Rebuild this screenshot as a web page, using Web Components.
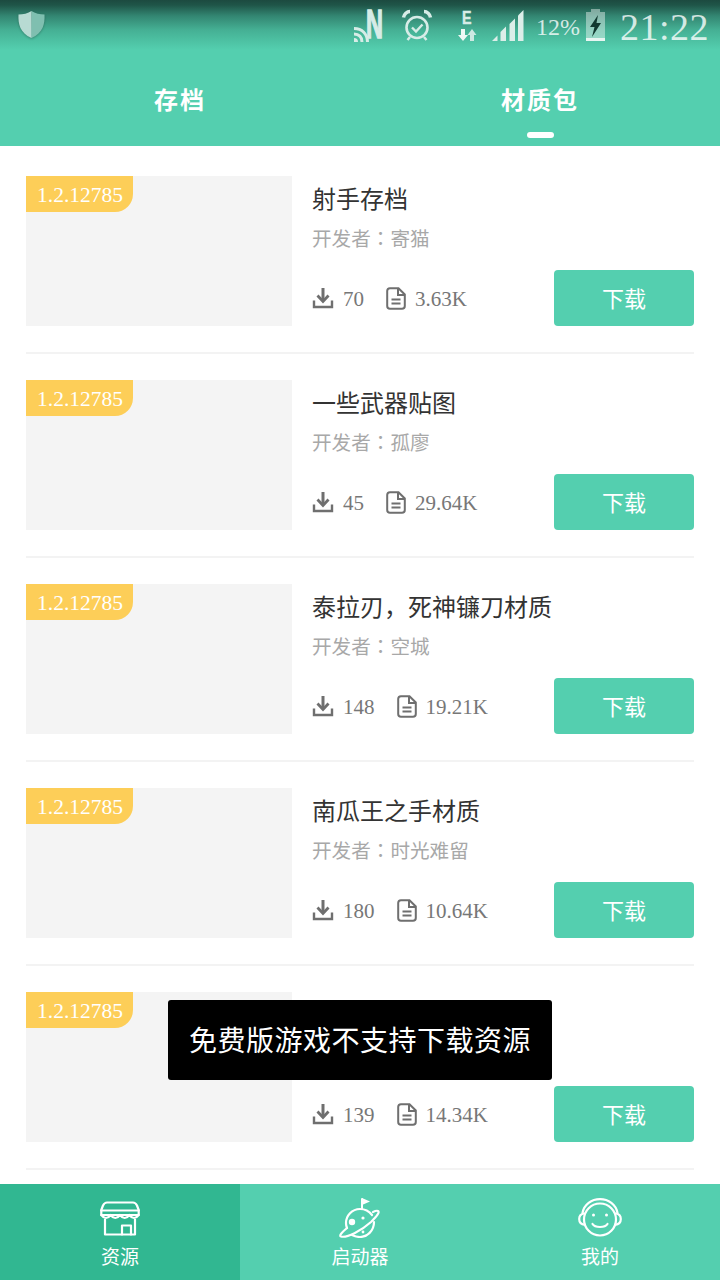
<!DOCTYPE html>
<html lang="zh">
<head>
<meta charset="utf-8">
<title>资源</title>
<style>
html,body{margin:0;padding:0;}
body{
    width:720px;
    height:1280px;
    overflow:hidden;
    background:#fff;
    font-family:"Liberation Serif","Noto Sans CJK SC",serif;
}
</style>
</head>
<body>
<app-shell>
    <status-bar slot="top"></status-bar>
    <top-tabs slot="top">
        <tab-item>存档</tab-item>
        <tab-item active>材质包</tab-item>
    </top-tabs>

    <res-card downloads="70" size="3.63K" author="寄猫">射手存档</res-card>
    <res-card downloads="45" size="29.64K" author="孤廖">一些武器贴图</res-card>
    <res-card downloads="148" size="19.21K" author="空城">泰拉刃，死神镰刀材质</res-card>
    <res-card downloads="180" size="10.64K" author="时光难留">南瓜王之手材质</res-card>
    <res-card downloads="139" size="14.34K"></res-card>

    <bottom-nav slot="bottom">
        <nav-item active label="资源">
            <svg width="40" height="35" viewBox="0 0 40 35" fill="none" stroke="#fff" stroke-width="2.2" stroke-linejoin="round" stroke-linecap="round">
                <path d="M7 1.500H33C35 1.500 36 2.500 37 4.500L38.700 9V14H1.300V9L3 4.500C4 2.500 5 1.500 7 1.500Z"/>
                <path d="M1.300 9.500H38.700"/>
                <path d="M1.300 14Q6 20 10.600 14Q15.300 20 20 14Q24.700 20 29.400 14Q34 20 38.700 14"/>
                <path d="M5 18.500V33.500H35V18.500"/>
                <path d="M22 33.500V24.500H31V33.500"/>
            </svg>
        </nav-item>
        <nav-item label="启动器">
            <svg width="42" height="40" viewBox="0 0 42 40" fill="none" stroke="#fff" stroke-width="2.2" stroke-linecap="round">
                <path d="M23 11V1" stroke-width="2"/>
                <path d="M23 0L31 3.500L23 7Z" fill="#fff" stroke="none"/>
                <path d="M33 17C30 13 26 11 21 11C13 11 7 17.500 7 25C7 27 7.300 28.500 8 30"/>
                <path d="M35 24C35 33 28 39 21 39C18 39 16 38.500 13 37"/>
                <path d="M8 30C2 35 0 38 2 38.500C8 40 22 33 32 24C38 18 41 14 39 13C38 12.500 36 13 34 14"/>
                <circle cx="13" cy="24" r="3.200" fill="#fff" stroke="none"/>
                <circle cx="24" cy="20" r="1.600" fill="#fff" stroke="none"/>
                <circle cx="24" cy="34" r="1.400" fill="#fff" stroke="none"/>
            </svg>
        </nav-item>
        <nav-item label="我的">
            <svg width="44" height="40" viewBox="0 0 44 40" fill="none" stroke="#fff" stroke-width="2.2" stroke-linecap="round">
                <path d="M4.500 15C6 6.500 13.500 1.200 22 1.200C30.500 1.200 38 6.500 39.500 15"/>
                <circle cx="22" cy="21.500" r="16"/>
                <path d="M6 15.500C2.500 16 1.200 18.500 1.200 21C1.200 24 3 26.500 7 26.800"/>
                <path d="M38 15.500C41.500 16 42.800 18.500 42.800 21C42.800 24 41 26.500 37 26.800"/>
                <circle cx="15.500" cy="17" r="1.500" fill="#fff" stroke="none"/>
                <circle cx="28.500" cy="17" r="1.500" fill="#fff" stroke="none"/>
                <path d="M14.500 26C17 30 27 30 29.500 26"/>
            </svg>
        </nav-item>
    </bottom-nav>

    <app-toast slot="overlay">免费版游戏不支持下载资源</app-toast>
</app-shell>

<script>
class AppShell extends HTMLElement{
    constructor(){
        super();
        this.attachShadow({mode:'open'}).innerHTML = `
        <style>
        :host{
            display:flex;
            flex-direction:column;
            position:relative;
            width:720px;
            height:1280px;
            overflow:hidden;
        }
        .top{
            display:block;
            height:146px;
            background:linear-gradient(to bottom,#1c4a40 0,#1f5548 5px,#338672 16px,#45b094 30px,#54cfaf 50px);
        }
        .list{
            flex:1;
            overflow:hidden;
            padding:4px 26px 0;
            min-height:0;
        }
        </style>
        <div class="top"><slot name="top"></slot></div>
        <div class="list"><slot></slot></div>
        <slot name="bottom"></slot>
        <slot name="overlay"></slot>
        `;
    }
}

class StatusBar extends HTMLElement{
    constructor(){
        super();
        this.attachShadow({mode:'open'}).innerHTML = `
        <style>
        :host{
            display:flex;
            align-items:flex-start;
            height:50px;
            color:rgba(255,255,255,.78);
        }
        svg{display:block;flex:none;overflow:visible;}
        .shield{margin:11px 0 0 18px;filter:drop-shadow(0 1px 1px rgba(0,0,0,.25));}
        .nfc{margin:8px 0 0 309px;}
        .alarm{margin:10px 0 0 18px;}
        .net{margin:9px 0 0 26px;}
        .signal{margin:10px 0 0 16px;}
        .pct{margin:13px 0 0 12px;font-size:24px;line-height:28px;}
        .batt{margin:9px 0 0 5px;}
        .time{margin:5px 0 0 14px;font-size:38px;line-height:44px;letter-spacing:.5px;white-space:nowrap;}
        </style>
        <svg class="shield" width="27" height="27" viewBox="0 0 27 27">
            <path d="M13.500 0C17 2.500 22 3.500 26.500 3.500C27 13 25 22 13.500 27Z" fill="#7fbfb0"/>
            <path d="M13.500 0C10 2.500 5 3.500 .5 3.500C0 13 2 22 13.500 27Z" fill="#b8dbd3"/>
        </svg>
        <svg class="nfc" width="30" height="34" viewBox="0 0 30 34" fill="none">
            <text x="12" y="30" font-family="Liberation Sans" font-size="41" font-weight="700" fill="#d7ece7" stroke="#d7ece7" stroke-width="1.500" textLength="17" lengthAdjust="spacingAndGlyphs">N</text>
            <g stroke="#d7ece7" stroke-width="3">
                <path d="M0 20.500C8 20.500 13.500 26 13.500 34"/>
                <path d="M0 26C5 26 8 29 8 34"/>
            </g>
            <path d="M0 30A4 4 0 0 1 4 34H0Z" fill="#d7ece7"/>
        </svg>
        <svg class="alarm" width="30" height="31" viewBox="0 0 30 31" fill="none" stroke="#d7ece7">
            <circle cx="15" cy="17.500" r="10.500" stroke-width="2.600"/>
            <path d="M10 17.500L14 21.500L20.500 14.500" stroke-width="2.400"/>
            <path d="M1.500 7.500C2 4 5 1.500 8 1.500" stroke-width="3.500"/>
            <path d="M28.500 7.500C28 4 25 1.500 22 1.500" stroke-width="3.500"/>
            <path d="M8 27L5.500 30M22 27L24.500 30" stroke-width="2.500"/>
        </svg>
        <svg class="net" width="18" height="33" viewBox="0 0 18 33">
            <text x="4" y="15" font-family="Liberation Sans" font-size="18" font-weight="700" fill="#d7ece7" stroke="#d7ece7" stroke-width=".5" textLength="9.500" lengthAdjust="spacingAndGlyphs">E</text>
            <path d="M3 20H7V26H10L5 32L0 26H3Z" fill="#eef8f5"/>
            <path d="M12 32H16V26H18.500L14 20L9.500 26H12Z" fill="#cde9e2"/>
        </svg>
        <svg class="signal" width="32" height="32" viewBox="0 0 32 32" fill="#dceee9">
            <path d="M0 31L5.500 25.500V31Z"/>
            <path d="M8.500 22L14 16.500V31H8.500Z"/>
            <path d="M17.500 14L23 8.500V31H17.500Z"/>
            <path d="M26 5.500L31.500 0V31H26Z"/>
        </svg>
        <div class="pct">12%</div>
        <svg class="batt" width="21" height="33" viewBox="0 0 21 33">
            <path d="M6 0H15V3H20V32H1V3H6Z" fill="#fff" opacity=".42"/>
            <rect x="1" y="29" width="19" height="3" fill="#e8f5f2"/>
            <path d="M13 6L5 18H9.500L7 28L16 14H11.500Z" fill="#123a31"/>
        </svg>
        <div class="time">21:22</div>
        `;
    }
}

class TopTabs extends HTMLElement{
    constructor(){
        super();
        this.attachShadow({mode:'open'}).innerHTML = `
        <style>
        :host{
            display:grid;
            grid-template-columns:360px 360px;
            height:96px;
        }
        </style>
        <slot></slot>
        `;
    }
}

class TabItem extends HTMLElement{
    constructor(){
        super();
        this.attachShadow({mode:'open'}).innerHTML = `
        <style>
        :host{
            display:flex;
            align-items:center;
            justify-content:center;
            position:relative;
            color:#fff;
            font-size:24px;
            font-weight:700;
            letter-spacing:2px;
        }
        :host([active])::after{
            content:"";
            position:absolute;
            left:167px;
            bottom:8px;
            width:27px;
            height:6px;
            border-radius:3px;
            background:#fff;
        }
        </style>
        <slot></slot>
        `;
    }
}

class ResCard extends HTMLElement{
    constructor(){
        super();
        const downloads = this.getAttribute('downloads');
        const size = this.getAttribute('size');
        const author = this.getAttribute('author');
        this.attachShadow({mode:'open'}).innerHTML = `
        <style>
        :host{
            display:flex;
            height:150px;
            padding:26px 0;
            border-bottom:2px solid #f3f3f3;
        }
        .thumb{
            flex:none;
            width:266px;
            height:150px;
            background:#f4f4f4;
        }
        .badge{
            width:107px;
            height:36px;
            box-sizing:border-box;
            padding-left:11px;
            background:#fdce58;
            border-bottom-right-radius:18px;
            color:#fff;
            font-size:21.500px;
            line-height:38px;
        }
        .info{
            flex:1;
            display:flex;
            flex-direction:column;
            margin-left:20px;
            padding-top:8px;
        }
        .title{
            height:32px;
            font-size:24px;
            line-height:32px;
            color:#333;
            white-space:nowrap;
        }
        .author{
            height:28px;
            margin-top:8px;
            font-size:19.600px;
            line-height:28px;
            color:#a8a8a8;
            white-space:nowrap;
        }
        .colon{font-family:"Noto Sans CJK TC",sans-serif;}
        .bottom{
            display:flex;
            align-items:center;
            justify-content:space-between;
            margin-top:auto;
        }
        .stats{
            display:flex;
            align-items:center;
            font-size:21px;
            color:#777;
        }
        .stats svg{display:block;flex:none;}
        .num{margin:2px 22px 0 9px;}
        .size{margin:2px 0 0 9px;}
        .btn{
            width:140px;
            height:56px;
            border-radius:4px;
            background:#54cfaf;
            color:#fff;
            font-size:22px;
            line-height:60px;
            text-align:center;
        }
        </style>
        <div class="thumb"><div class="badge">1.2.12785</div></div>
        <div class="info">
            <div class="title"><slot></slot></div>
            <div class="author">${author ? '开发者<span class="colon" lang="zh-Hant">：</span>' + author : ''}</div>
            <div class="bottom">
                <div class="stats">
                    <svg width="22" height="22" viewBox="0 0 22 22" fill="none" stroke="#6f6f6f">
                        <path d="M2 13.500V20H20V13.500" stroke-width="2.400"/>
                        <path d="M11 1V13" stroke-width="3"/>
                        <path d="M5.500 8.500L11 14.500L16.500 8.500" stroke-width="2.800"/>
                    </svg>
                    <span class="num">${downloads}</span>
                    <svg width="20" height="23" viewBox="0 0 20 23" fill="none" stroke="#6f6f6f" stroke-width="2">
                        <path d="M4 1.200H12.500L18.800 7.500V19C18.800 20.800 17.800 21.800 16 21.800H4C2.200 21.800 1.200 20.800 1.200 19V4C1.200 2.200 2.200 1.200 4 1.200Z"/>
                        <path d="M12 1.500V8H18.500"/>
                        <path d="M5.500 12.500H14.500M5.500 16.500H14.500"/>
                    </svg>
                    <span class="size">${size}</span>
                </div>
                <div class="btn">下载</div>
            </div>
        </div>
        `;
    }
}

class BottomNav extends HTMLElement{
    constructor(){
        super();
        this.attachShadow({mode:'open'}).innerHTML = `
        <style>
        :host{
            display:grid;
            grid-template-columns:repeat(3,240px);
            flex:none;
            height:96px;
            background:#54cfaf;
        }
        </style>
        <slot></slot>
        `;
    }
}

class NavItem extends HTMLElement{
    constructor(){
        super();
        const label = this.getAttribute('label');
        this.attachShadow({mode:'open'}).innerHTML = `
        <style>
        :host{
            display:flex;
            flex-direction:column;
            align-items:center;
            padding-top:14px;
            color:#fff;
        }
        :host([active]){background:#31b791;}
        .icon{
            display:flex;
            align-items:center;
            justify-content:center;
            height:40px;
        }
        .label{
            margin-top:6px;
            font-size:19px;
            line-height:28px;
        }
        </style>
        <div class="icon"><slot></slot></div>
        <div class="label">${label}</div>
        `;
    }
}

class AppToast extends HTMLElement{
    constructor(){
        super();
        this.attachShadow({mode:'open'}).innerHTML = `
        <style>
        :host{
            position:absolute;
            left:168px;
            top:1000px;
            width:384px;
            height:80px;
            box-sizing:border-box;
            padding-bottom:2px;
            display:flex;
            align-items:center;
            justify-content:center;
            border-radius:3px;
            background:#000;
            color:#fff;
            font-size:28px;
            letter-spacing:.5px;
            white-space:nowrap;
        }
        </style>
        <slot></slot>
        `;
    }
}

customElements.define('app-shell', AppShell);
customElements.define('status-bar', StatusBar);
customElements.define('top-tabs', TopTabs);
customElements.define('tab-item', TabItem);
customElements.define('res-card', ResCard);
customElements.define('bottom-nav', BottomNav);
customElements.define('nav-item', NavItem);
customElements.define('app-toast', AppToast);
</script>
</body>
</html>
